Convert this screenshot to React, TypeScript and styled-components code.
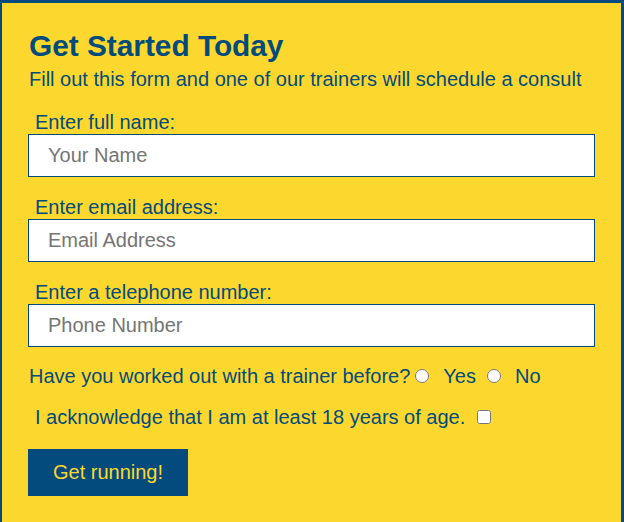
import React from "react";
import styled, { createGlobalStyle } from "styled-components";

const Global = createGlobalStyle`
  html, body { margin: 0; padding: 0; background: #fcd82e; }
  body { font-family: "Liberation Sans", Arial, sans-serif; }
`;

const BLUE = "#034b7c";
const YELLOW = "#fcd82e";

const Panel = styled.div`
  box-sizing: border-box;
  width: 624px;
  height: 522px;
  background: ${YELLOW};
  border-style: solid;
  border-color: ${BLUE};
  border-width: 3px 3px 0 2px;
  padding: 26px 26px 0 26px;
  color: ${BLUE};
`;

const Title = styled.h1`
  margin: 0 0 0 1px;
  font-size: 29.8px;
  line-height: 34px;
  font-weight: bold;
`;

const Subtitle = styled.p`
  margin: 4px 0 0 1px;
  font-size: 20px;
  line-height: 24px;
`;

const Form = styled.form`
  display: flex;
  flex-direction: column;
  align-items: flex-start;
  margin-top: 19px;
`;

const Field = styled.div`
  display: flex;
  flex-direction: column;
  margin-bottom: 18px;
`;

const Label = styled.label`
  font-size: 20px;
  line-height: 24px;
  padding-left: 7px;
`;

const Input = styled.input`
  box-sizing: border-box;
  width: 567px;
  height: 43px;
  border: 1px solid ${BLUE};
  background: #fff;
  padding: 0 19px;
  font-family: "Liberation Sans", Arial, sans-serif;
  font-size: 20px;
  color: #333;
  outline: none;
  &::placeholder { color: #757575; }
`;

const Row = styled.div<{ $indent?: number; $gapBelow: number }>`
  display: flex;
  align-items: center;
  font-size: 20px;
  line-height: 24px;
  padding-left: ${(p) => p.$indent ?? 1}px;
  margin-top: ${(p) => p.$gapBelow}px;
`;

const Radio = styled.input`
  margin: 0 14px 0 5px;
  width: 14px;
  height: 14px;
`;

const Option = styled.span`
  margin-right: 6px;
`;

const Check = styled.input`
  margin: 0 0 0 12px;
  width: 14px;
  height: 14px;
`;

const Button = styled.button`
  box-sizing: border-box;
  width: 160px;
  height: 47px;
  background: ${BLUE};
  color: ${YELLOW};
  border: none;
  font-family: "Liberation Sans", Arial, sans-serif;
  font-size: 20px;
  margin-top: 20px;
`;

export default function App() {
  return (
    <>
      <Global />
      <Panel>
        <Title>Get Started Today</Title>
        <Subtitle>Fill out this form and one of our trainers will schedule a consult</Subtitle>
        <Form onSubmit={(e) => e.preventDefault()}>
          <Field>
            <Label htmlFor="name">Enter full name:</Label>
            <Input id="name" placeholder="Your Name" />
          </Field>
          <Field>
            <Label htmlFor="email">Enter email address:</Label>
            <Input id="email" placeholder="Email Address" />
          </Field>
          <Field>
            <Label htmlFor="phone">Enter a telephone number:</Label>
            <Input id="phone" placeholder="Phone Number" />
          </Field>
          <Row $gapBelow={-1}>
            Have you worked out with a trainer before?
            <Radio type="radio" name="trainer" id="yes" />
            <Option>Yes</Option>
            <Radio type="radio" name="trainer" id="no" />
            <Option>No</Option>
          </Row>
          <Row $indent={7} $gapBelow={17}>
            I acknowledge that I am at least 18 years of age.
            <Check type="checkbox" />
          </Row>
          <Button type="submit">Get running!</Button>
        </Form>
      </Panel>
    </>
  );
}
